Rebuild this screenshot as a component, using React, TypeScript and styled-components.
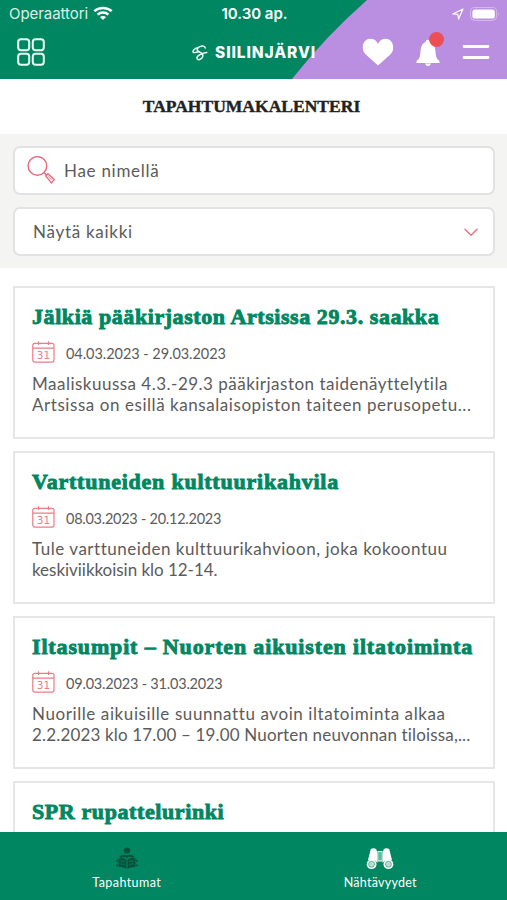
import React from 'react';
import styled, { createGlobalStyle } from 'styled-components';

const green = '#008761';
const purple = '#ba8ee0';
const coral = '#e9697a';
const grey = '#5b5b5b';

const GlobalStyle = createGlobalStyle`
  * { box-sizing: border-box; }
  body { margin: 0; background: #fff; overflow: hidden; }
`;

const Screen = styled.div`
  width: 507px;
  height: 900px;
  display: flex;
  flex-direction: column;
  overflow: hidden;
  background: #fff;
  font-family: Lato, 'Open Sans', sans-serif;
  font-variant-ligatures: none;
  color: ${grey};
`;

const Header = styled.header`
  position: relative;
  flex: 0 0 79px;
  background: ${green};
  color: #fff;
  isolation: isolate;
  &::before {
    content: '';
    position: absolute;
    inset: 0;
    z-index: -1;
    background: ${purple};
    clip-path: path('M367 0 Q325 37 292 79 H507 V0 Z');
  }
`;

const StatusBar = styled.div`
  display: grid;
  grid-template-columns: 1fr auto 1fr;
  align-items: center;
  height: 27px;
  padding: 0 7px 0 9px;
`;

const StatusSide = styled.div<{ $end?: boolean }>`
  display: flex;
  align-items: center;
  gap: ${p => (p.$end ? 6 : 5)}px;
  justify-content: ${p => (p.$end ? 'flex-end' : 'flex-start')};
`;

const Carrier = styled.span`
  font: 400 15px/20px Inter, sans-serif;
  letter-spacing: -0.06px;
  color: #d9f0e8;
`;

const Clock = styled.time`
  font: 600 15px/20px Inter, sans-serif;
`;

const Toolbar = styled.div`
  display: grid;
  grid-template-columns: 175px 1fr 146px;
  align-items: center;
  height: 50px;
  padding: 0 17px;
`;

const Brand = styled.div`
  display: flex;
  align-items: center;
  gap: 7px;
  padding-top: 2px;
  white-space: nowrap;
`;

const BrandName = styled.span`
  font: 800 15.5px/20px Inter, sans-serif;
  letter-spacing: 0.9px;
`;

const Actions = styled.div`
  display: flex;
  align-items: center;
  justify-content: flex-end;
  gap: 22px;
`;

const BellButton = styled.div`
  position: relative;
  display: flex;
`;

const Badge = styled.i`
  position: absolute;
  top: -7px;
  right: -4px;
  width: 15px;
  height: 15px;
  border-radius: 50%;
  background: #ed4f57;
`;

const PageTitle = styled.h1`
  flex: 0 0 55px;
  margin: 0;
  padding-right: 4px;
  text-align: center;
  font: 700 17.5px/55px 'Liberation Serif', serif;
  letter-spacing: 0.02px;
  color: #222;
  -webkit-text-stroke: 0.4px #222;
`;

const Filters = styled.section`
  flex: 0 0 134px;
  display: flex;
  flex-direction: column;
  gap: 12px;
  padding: 12px 12px 0 13px;
  background: #f4f4f3;
`;

const Field = styled.div<{ $select?: boolean }>`
  display: flex;
  align-items: center;
  justify-content: ${p => (p.$select ? 'space-between' : 'flex-start')};
  gap: 8px;
  height: 49px;
  padding: 0 ${p => (p.$select ? '15px 0 18px' : '13px 0 12px')};
  border: 2px solid #e2e2e2;
  border-radius: 7px;
  background: #fff;
`;

const FieldText = styled.span<{ $spacing: number }>`
  font-size: 17px;
  line-height: 22px;
  letter-spacing: ${p => p.$spacing}px;
`;

const List = styled.main`
  flex: 1;
  min-height: 0;
  overflow: hidden;
  display: flex;
  flex-direction: column;
  gap: 12px;
  padding: 18px 12px 0 13px;
`;

const Card = styled.article`
  flex: 0 0 153px;
  padding: 15px 0 0 17px;
  border: 2px solid #e6e6e6;
  overflow: hidden;
`;

const CardTitle = styled.h2<{ $spacing: number }>`
  margin: 0;
  font: 700 22px/28px 'Liberation Serif', serif;
  letter-spacing: ${p => p.$spacing}px;
  white-space: nowrap;
  color: ${green};
  -webkit-text-stroke: 0.9px ${green};
`;

const DateRow = styled.div`
  display: flex;
  align-items: center;
  gap: 11px;
  height: 24px;
  margin-top: 9px;
`;

const DateText = styled.span<{ $spacing: number }>`
  font-size: 14.5px;
  line-height: 20px;
  padding-top: 4px;
  letter-spacing: ${p => p.$spacing}px;
`;

const Description = styled.p`
  margin: 9px 0 0;
`;

const Line = styled.span<{ $spacing: number }>`
  display: block;
  font-size: 17px;
  line-height: 21px;
  white-space: nowrap;
  letter-spacing: ${p => p.$spacing}px;
`;

const BottomNav = styled.nav`
  flex: 0 0 68px;
  display: grid;
  grid-template-columns: 1fr 1fr;
  background: ${green};
`;

const Tab = styled.a`
  display: flex;
  flex-direction: column;
  align-items: center;
  gap: 5px;
  padding-top: 15px;
  color: #fff;
`;

const TabLabel = styled.span<{ $spacing: number }>`
  font-size: 12.5px;
  line-height: 16px;
  letter-spacing: ${p => p.$spacing}px;
`;

const WifiIcon = () => (
  <svg width="20" height="15" viewBox="0 0 20 15" fill="none" stroke="#fff" strokeWidth="2.5">
    <path d="M1.3 5.2 C6 .8 14 .8 18.7 5.2" />
    <path d="M4.6 8.7 C7.6 5.9 12.4 5.9 15.4 8.7" />
    <path d="M10 14 L6.9 11 C8.6 9.5 11.4 9.5 13.1 11Z" fill="#fff" stroke="none" />
  </svg>
);

const LocationIcon = () => (
  <svg width="12" height="12" viewBox="0 0 12 12" fill="none" stroke="#fff" strokeWidth="1.2" strokeLinejoin="round">
    <path d="M.8 6 L11 1 L6.6 11.1 L5.8 6.3Z" />
  </svg>
);

const BatteryIcon = () => (
  <svg width="30" height="14" viewBox="0 0 30 14">
    <rect x=".6" y=".6" width="26" height="12.8" rx="4" fill="none" stroke="#d7bdec" />
    <rect x="2.4" y="2.4" width="22.4" height="9.2" rx="2.6" fill="#fff" />
    <path d="M28 5 Q29.7 7 28 9Z" fill="#d7bdec" />
  </svg>
);

const GridIcon = () => (
  <svg width="28" height="28" viewBox="0 0 28 28" fill="none" stroke="#e9fff5" strokeWidth="2">
    <rect x="1.2" y="1.2" width="11" height="11" rx="2.7" />
    <rect x="15.8" y="1.2" width="11" height="11" rx="2.7" />
    <rect x="1.2" y="15.8" width="11" height="11" rx="2.7" />
    <rect x="15.8" y="15.8" width="11" height="11" rx="2.7" />
  </svg>
);

const SignatureIcon = () => (
  <svg width="16" height="16" viewBox="0 0 16 16" fill="none" stroke="#e8fff5" strokeWidth="1.5" strokeLinecap="round" strokeLinejoin="round">
    <path d="M13.2 3 C13 .9 10.300 .6 7.800 1.600 C4.600 3 4.200 5.400 6.800 6.600 C9.800 7.800 11.800 9 10.700 11.800 C9.500 14.800 5.800 15.600 5 13.400 C4.400 11.200 9 8.400 14.800 7.600" />
    <path d="M6 2.600 C2.600 3.400 .2 5.900 1.300 7.200 C2.300 8.200 5 7.300 7 6.700" />
  </svg>
);

const HeartIcon = () => (
  <svg width="32" height="28" viewBox="0 0 32 28" fill="#fff">
    <path d="M16 27.6 L3.2 16 C.9 13.7 .7 11 .8 8.6 C1.2 3.9 4.2 .8 8.4 .8 C12 .8 14.5 2.8 16 5.7 C17.5 2.8 20 .8 23.6 .8 C27.8 .8 30.8 3.9 31.1 8.6 C31.3 11 31.1 13.7 28.8 16Z" />
  </svg>
);

const BellIcon = () => (
  <svg width="24" height="27" viewBox="0 0 24 27" fill="#fff">
    <path d="M10 1.5 Q12 0 14 1.5 L14.3 3 C19.3 4.7 19.2 10 19.7 15 C20 19 21.4 20.5 23.5 22 V24 H.5 V22 C2.6 20.5 4 19 4.3 15 C4.8 10 4.7 4.7 9.7 3Z" />
    <path d="M9 24.5 H15 Q14.3 27 12 27 Q9.7 27 9 24.5Z" />
  </svg>
);

const MenuIcon = () => (
  <svg width="28" height="16" viewBox="0 0 28 16" stroke="#fff" strokeWidth="2.8" strokeLinecap="round">
    <path d="M2 2.5 H26 M2 13.5 H26" />
  </svg>
);

const SearchIcon = () => (
  <svg width="29" height="29" viewBox="0 0 29 29" fill="none" stroke={coral} strokeWidth="1.4">
    <circle cx="10.4" cy="9.9" r="9.3" />
    <path d="M17 16.600 L19.600 19.200" />
    <path d="M18.700 19.900 L20.900 17.700 L27.300 23.500 L24.400 26.900Z" strokeLinejoin="round" />
    <path d="M21 20.200 L24.700 23.900" strokeWidth=".8" />
  </svg>
);

const ChevronIcon = () => (
  <svg width="14" height="9" viewBox="0 0 14 9" fill="none" stroke={coral} strokeWidth="1.3" strokeLinecap="round">
    <path d="M1 2.2 L7 8.2 L13 2.2" />
  </svg>
);

const CalendarNumber = styled.text`
  font: 400 10.5px 'DejaVu Sans', sans-serif;
  fill: #ed7c84;
`;

const CalendarIcon = () => (
  <svg width="23" height="24" viewBox="0 0 23 24" fill="none" stroke="#ed7c84" strokeWidth="1.2">
    <rect x=".8" y="3.3" width="21.2" height="18.8" rx="2" />
    <path d="M.8 8.2 H22 M6.5 1.2 V5 M16.5 1.2 V5" />
    <CalendarNumber x="11.4" y="18.8" textAnchor="middle" stroke="none">31</CalendarNumber>
  </svg>
);

const ReaderIcon = () => (
  <svg width="24" height="23" viewBox="0 0 24 23" fill="#07513d">
    <circle cx="12" cy="3.6" r="3.2" />
    <path d="M4.5 9.5 Q8.5 6.5 12 8.8 Q15.500 6.5 19.500 9.5 L18 11 Q14.500 9 12 11 Q9.500 9 6 11Z" />
    <path d="M3.500 11.200 Q8 10.500 11.500 12.500 V21.800 Q8 19.500 3.500 20Z M20.500 11.200 Q16 10.500 12.500 12.500 V21.800 Q16 19.500 20.500 20Z" />
    <path d="M2.700 12 L.8 14 L2.700 15.500 M2.700 16.500 L.8 18.500 L2.700 20 M21.300 12 L23.200 14 L21.300 15.500 M21.300 16.500 L23.200 18.500 L21.300 20" />
    <path d="M5.500 14.200 Q8 13.800 9.800 14.900 M5.500 17 Q8 16.600 9.800 17.700 M18.500 14.200 Q16 13.800 14.200 14.900 M18.500 17 Q16 16.600 14.200 17.700" fill="none" stroke={green} strokeWidth=".8" />
  </svg>
);

const BinocularsIcon = () => (
  <svg width="28" height="23" viewBox="0 0 28 23" fill="#fff">
    <path d="M4.800 2 Q7.500 .6 10.200 2 L11.400 6 V16 Q9 11.500 2 13Z M23.200 2 Q20.500 .6 17.800 2 L16.600 6 V16 Q19 11.500 26 13Z" />
    <rect x="12" y="4.500" width="4" height="9.500" fill="none" stroke="#fff" strokeWidth="1" />
    <path d="M14 4.500 V14" stroke="#fff" strokeWidth=".8" />
    <circle cx="5.600" cy="17.200" r="4.900" />
    <circle cx="22.400" cy="17.200" r="4.900" />
    <circle cx="5.600" cy="17.200" r="3" fill="#b7ddcf" stroke={green} strokeWidth=".5" />
    <circle cx="22.400" cy="17.200" r="3" fill="#b7ddcf" stroke={green} strokeWidth=".5" />
  </svg>
);

type Spaced = { text: string; spacing: number };
type EventItem = { title: Spaced; date?: Spaced; lines: Spaced[] };

const events: EventItem[] = [
  {
    title: { text: 'Jälkiä pääkirjaston Artsissa 29.3. saakka', spacing: 0.57 },
    date: { text: '04.03.2023 - 29.03.2023', spacing: -0.05 },
    lines: [
      { text: 'Maaliskuussa 4.3.-29.3 pääkirjaston taidenäyttelytila', spacing: 0.49 },
      { text: 'Artsissa on esillä kansalaisopiston taiteen perusopetu...', spacing: 0.56 },
    ],
  },
  {
    title: { text: 'Varttuneiden kulttuurikahvila', spacing: 0.77 },
    date: { text: '08.03.2023 - 20.12.2023', spacing: -0.26 },
    lines: [
      { text: 'Tule varttuneiden kulttuurikahvioon, joka kokoontuu', spacing: 0.52 },
      { text: 'keskiviikkoisin klo 12-14.', spacing: -0.03 },
    ],
  },
  {
    title: { text: 'Iltasumpit – Nuorten aikuisten iltatoiminta', spacing: 0.85 },
    date: { text: '09.03.2023 - 31.03.2023', spacing: -0.2 },
    lines: [
      { text: 'Nuorille aikuisille suunnattu avoin iltatoiminta alkaa', spacing: 0.59 },
      { text: '2.2.2023 klo 17.00 – 19.00 Nuorten neuvonnan tiloissa,...', spacing: 0.16 },
    ],
  },
  { title: { text: 'SPR rupattelurinki', spacing: 0.6 }, lines: [] },
];

export default function App() {
  return (
    <Screen>
      <GlobalStyle />
      <Header>
        <StatusBar>
          <StatusSide>
            <Carrier>Operaattori</Carrier>
            <WifiIcon />
          </StatusSide>
          <Clock>10.30 ap.</Clock>
          <StatusSide $end>
            <LocationIcon />
            <BatteryIcon />
          </StatusSide>
        </StatusBar>
        <Toolbar>
          <GridIcon />
          <Brand>
            <SignatureIcon />
            <BrandName>SIILINJÄRVI</BrandName>
          </Brand>
          <Actions>
            <HeartIcon />
            <BellButton>
              <BellIcon />
              <Badge />
            </BellButton>
            <MenuIcon />
          </Actions>
        </Toolbar>
      </Header>
      <PageTitle>TAPAHTUMAKALENTERI</PageTitle>
      <Filters>
        <Field>
          <SearchIcon />
          <FieldText $spacing={0.72}>Hae nimellä</FieldText>
        </Field>
        <Field $select>
          <FieldText $spacing={0.72}>Näytä kaikki</FieldText>
          <ChevronIcon />
        </Field>
      </Filters>
      <List>
        {events.map(event => (
          <Card key={event.title.text}>
            <CardTitle $spacing={event.title.spacing}>{event.title.text}</CardTitle>
            {event.date && (
              <DateRow>
                <CalendarIcon />
                <DateText $spacing={event.date.spacing}>{event.date.text}</DateText>
              </DateRow>
            )}
            <Description>
              {event.lines.map(line => (
                <Line key={line.text} $spacing={line.spacing}>{line.text}</Line>
              ))}
            </Description>
          </Card>
        ))}
      </List>
      <BottomNav>
        <Tab>
          <ReaderIcon />
          <TabLabel $spacing={0.42}>Tapahtumat</TabLabel>
        </Tab>
        <Tab>
          <BinocularsIcon />
          <TabLabel $spacing={0.27}>Nähtävyydet</TabLabel>
        </Tab>
      </BottomNav>
    </Screen>
  );
}
